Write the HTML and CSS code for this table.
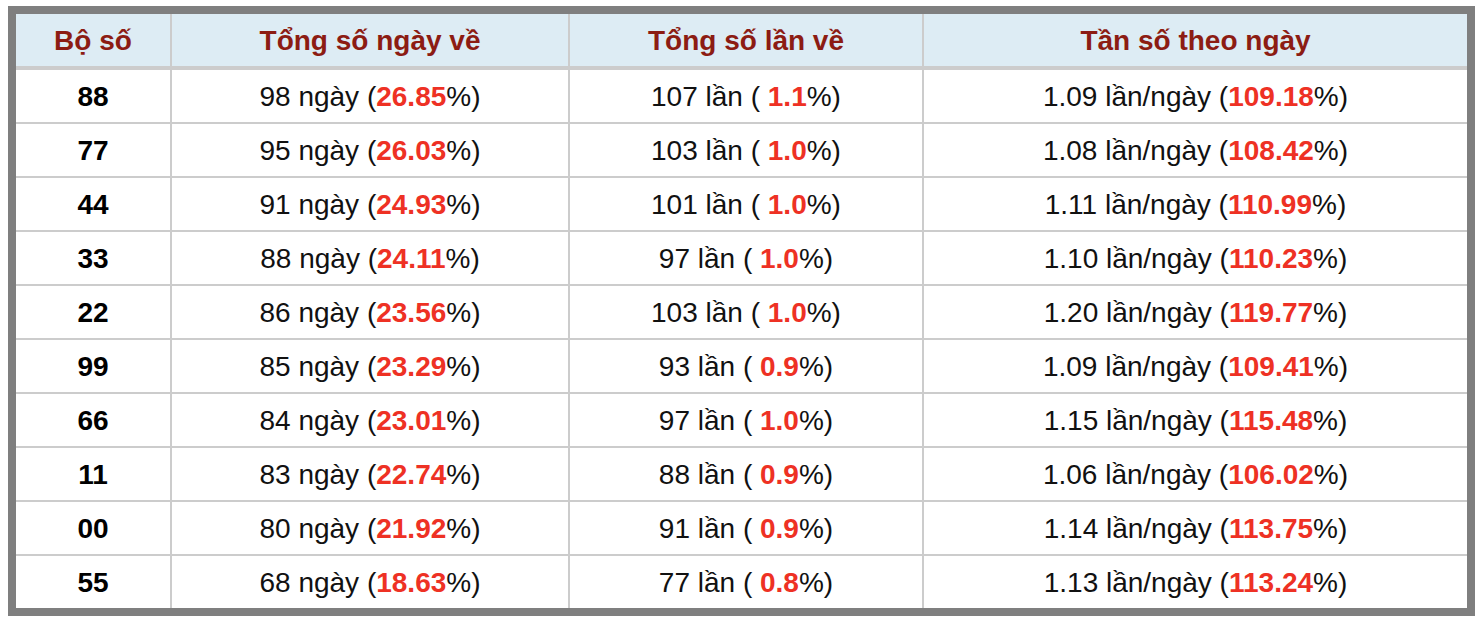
FILE: index.html
```html
<!DOCTYPE html>
<html lang="vi">
<head>
<meta charset="utf-8">
<title>Thống kê bộ số</title>
<link rel="stylesheet" href="styles.css">
</head>
<body>
<div class="frame">
<table class="stats">
<colgroup>
<col class="c1"><col class="c2"><col class="c3"><col class="c4">
</colgroup>
<thead>
<tr><th>Bộ số</th><th>Tổng số ngày về</th><th>Tổng số lần về</th><th>Tần số theo ngày</th></tr>
</thead>
<tbody>
<tr><td class="num">88</td><td>98 ngày (<b class="hl">26.85</b>%)</td><td>107 lần ( <b class="hl">1.1</b>%)</td><td>1.09 lần/ngày (<b class="hl">109.18</b>%)</td></tr>
<tr><td class="num">77</td><td>95 ngày (<b class="hl">26.03</b>%)</td><td>103 lần ( <b class="hl">1.0</b>%)</td><td>1.08 lần/ngày (<b class="hl">108.42</b>%)</td></tr>
<tr><td class="num">44</td><td>91 ngày (<b class="hl">24.93</b>%)</td><td>101 lần ( <b class="hl">1.0</b>%)</td><td>1.11 lần/ngày (<b class="hl">110.99</b>%)</td></tr>
<tr><td class="num">33</td><td>88 ngày (<b class="hl">24.11</b>%)</td><td>97 lần ( <b class="hl">1.0</b>%)</td><td>1.10 lần/ngày (<b class="hl">110.23</b>%)</td></tr>
<tr><td class="num">22</td><td>86 ngày (<b class="hl">23.56</b>%)</td><td>103 lần ( <b class="hl">1.0</b>%)</td><td>1.20 lần/ngày (<b class="hl">119.77</b>%)</td></tr>
<tr><td class="num">99</td><td>85 ngày (<b class="hl">23.29</b>%)</td><td>93 lần ( <b class="hl">0.9</b>%)</td><td>1.09 lần/ngày (<b class="hl">109.41</b>%)</td></tr>
<tr><td class="num">66</td><td>84 ngày (<b class="hl">23.01</b>%)</td><td>97 lần ( <b class="hl">1.0</b>%)</td><td>1.15 lần/ngày (<b class="hl">115.48</b>%)</td></tr>
<tr><td class="num">11</td><td>83 ngày (<b class="hl">22.74</b>%)</td><td>88 lần ( <b class="hl">0.9</b>%)</td><td>1.06 lần/ngày (<b class="hl">106.02</b>%)</td></tr>
<tr><td class="num">00</td><td>80 ngày (<b class="hl">21.92</b>%)</td><td>91 lần ( <b class="hl">0.9</b>%)</td><td>1.14 lần/ngày (<b class="hl">113.75</b>%)</td></tr>
<tr><td class="num">55</td><td>68 ngày (<b class="hl">18.63</b>%)</td><td>77 lần ( <b class="hl">0.8</b>%)</td><td>1.13 lần/ngày (<b class="hl">113.24</b>%)</td></tr>
</tbody>
</table>
</div>
</body>
</html>
```
FILE: styles.css
```css
html, body {
  background: #ffffff;
}
body {
  margin: 6px 0 0 8px;
  font-family: "Liberation Sans", Arial, Helvetica, sans-serif;
  color: #111111;
}
.frame {
  width: 1467px;
  box-sizing: border-box;
  border: 8px solid #7f7f7f;
  background: #ffffff;
}
.stats {
  width: 1451px;
  table-layout: fixed;
  border-collapse: separate;
  border-spacing: 0;
  font-size: 28px;
}
.c1 { width: 156px; }
.c2 { width: 398px; }
.c3 { width: 354px; }
.c4 { width: 543px; }
.stats th,
.stats td {
  padding: 2px 0 0 0;
  line-height: 50px;
  text-align: center;
  white-space: nowrap;
  border-right: 2px solid #cccccc;
  border-bottom: 2px solid #cccccc;
}
.stats th:last-child,
.stats td:last-child {
  border-right: 0;
}
.stats tbody tr:last-child td {
  border-bottom: 0;
}
.stats th {
  background: #ddecf4;
  color: #8c1c13;
  font-weight: bold;
  border-bottom: 4px solid #cccccc;
}
.num {
  font-weight: bold;
  color: #000000;
}
.hl {
  color: #ee3124;
  font-weight: bold;
}
```
